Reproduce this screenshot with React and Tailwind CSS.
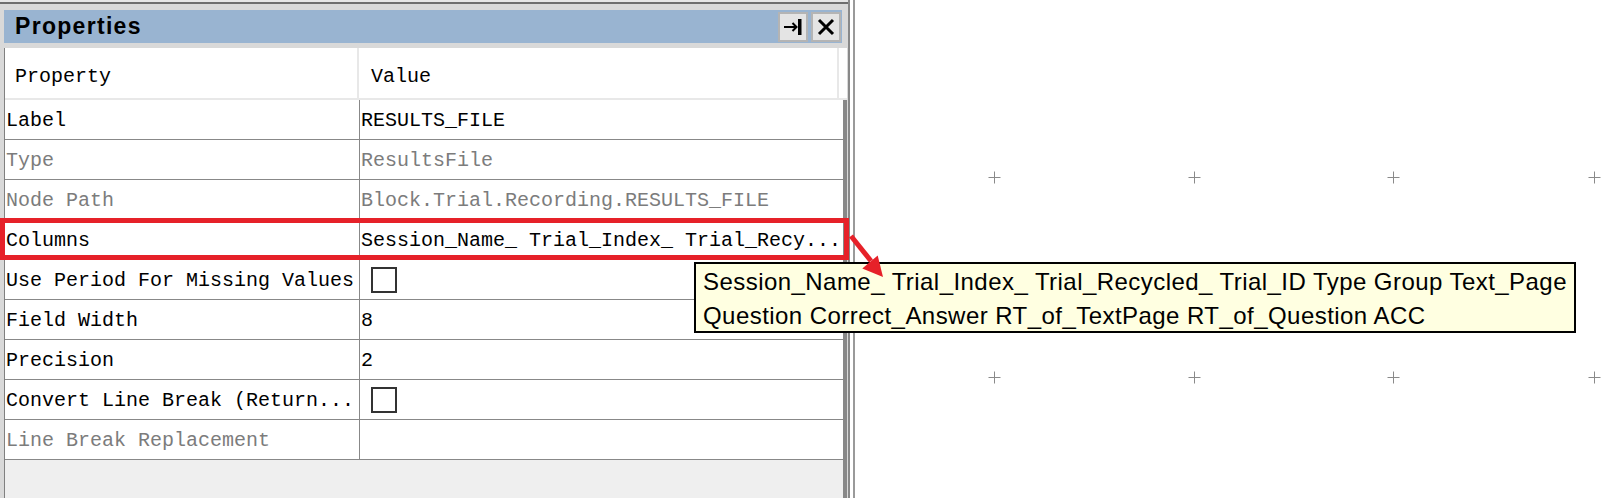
import React from 'react';

const rows = [
  { label: 'Label', value: 'RESULTS_FILE' },
  { label: 'Type', value: 'ResultsFile', muted: true },
  { label: 'Node Path', value: 'Block.Trial.Recording.RESULTS_FILE', muted: true },
  { label: 'Columns', value: 'Session_Name_ Trial_Index_ Trial_Recy...' },
  { label: 'Use Period For Missing Values', check: true },
  { label: 'Field Width', value: '8' },
  { label: 'Precision', value: '2' },
  { label: 'Convert Line Break (Return...', check: true },
  { label: 'Line Break Replacement', value: '', muted: true },
];

const plusSpots = [
  'left-[133px] top-[171px]',
  'left-[333px] top-[171px]',
  'left-[532px] top-[171px]',
  'left-[733px] top-[171px]',
  'left-[133px] top-[371px]',
  'left-[333px] top-[371px]',
  'left-[532px] top-[371px]',
  'left-[733px] top-[371px]',
];

function Plus({ spot }) {
  return (
    <svg className={`absolute ${spot}`} width="13" height="13" viewBox="0 0 13 13">
      <path d="M6.5 0.5V12.5M0.5 6.5H12.5" stroke="#8a8a8a" strokeWidth="1" />
    </svg>
  );
}

export default function App() {
  const mono = { fontFamily: '"Liberation Mono", monospace' };

  return (
    <div className="relative w-[1610px] h-[498px] overflow-hidden bg-white flex">
      {/* properties panel */}
      <div className="w-[848px] h-full flex flex-col bg-[#d9d9d9]">
        <div className="h-[2px] bg-[#e6e6e6]" />
        <div className="h-[2px] bg-[#6e6e6e]" />
        <div className="h-[6px]" />
        <div className="h-[33px] ml-[4px] mr-[6px] bg-[#99b4d1] flex items-center justify-between">
          <span
            className="pl-[11px] text-[23px] font-bold tracking-[1.3px] text-black leading-none"
            style={{ fontFamily: '"Liberation Sans", Arial, sans-serif' }}
          >
            Properties
          </span>
          <div className="flex gap-[3px] mr-[1px]">
            <div className="w-[30px] h-[30px] border-2 border-[#b4b4b4] bg-[#e4e4e4] flex items-center justify-center">
              <svg width="26" height="26" viewBox="0 0 26 26">
                <path d="M4 13H16" stroke="#000" strokeWidth="2" />
                <path d="M12.5 9L16.5 13L12.5 17" stroke="#000" strokeWidth="2" fill="none" />
                <rect x="18" y="5" width="3.5" height="16" fill="#000" />
              </svg>
            </div>
            <div className="w-[30px] h-[30px] border-2 border-[#b4b4b4] bg-[#e4e4e4] flex items-center justify-center">
              <svg width="26" height="26" viewBox="0 0 26 26">
                <path d="M6 6L20 20M20 6L6 20" stroke="#000" strokeWidth="3" />
              </svg>
            </div>
          </div>
        </div>
        <div className="h-[5px]" />

        <div className="flex-1 ml-[4px] mr-[1px] border-l border-[#808080] flex flex-col bg-white" style={mono}>
          <div className="h-[52px] flex border-b-2 border-[#e8e8e8] text-[20px] text-black">
            <div className="w-[354px] border-r-2 border-[#e8e8e8] pl-[10px] pt-[7px] flex items-center">Property</div>
            <div className="flex-1 pl-[12px] pt-[7px] flex items-center">Value</div>
            <div className="w-[10px] border-l-2 border-[#e8e8e8]" />
          </div>
          <div className="flex-1 flex flex-col border-r-[4px] border-[#888888] bg-[#efefef]">
            {rows.map((r) => (
              <div key={r.label} className="h-[40px] flex border-b border-[#888888] bg-white text-[20px] leading-none">
                <div
                  className={`w-[355px] border-r border-[#888888] pl-[1px] pt-[3px] flex items-center whitespace-nowrap overflow-hidden ${
                    r.muted ? 'text-[#7c7c7c]' : 'text-black'
                  }`}
                >
                  {r.label}
                </div>
                <div
                  className={`flex-1 pl-[1px] flex items-center whitespace-nowrap overflow-hidden ${
                    r.muted ? 'text-[#7c7c7c]' : 'text-black'
                  }`}
                >
                  {r.check ? (
                    <div className="ml-[10px] w-[26px] h-[26px] border-2 border-[#333333] bg-white" />
                  ) : (
                    <span className="pt-[3px]">{r.value}</span>
                  )}
                </div>
              </div>
            ))}
          </div>
        </div>
      </div>

      {/* splitter */}
      <div className="w-[7px] h-full flex">
        <div className="w-[2px] bg-[#888888]" />
        <div className="w-[3px] bg-white" />
        <div className="w-[2px] bg-[#9a9a9a]" />
      </div>

      {/* canvas */}
      <div className="relative flex-1 h-full bg-white">
        {plusSpots.map((s) => (
          <Plus key={s} spot={s} />
        ))}
      </div>

      {/* highlight box around Columns row */}
      <div className="absolute left-0 top-[218px] w-[849px] h-[42px] border-[5px] border-[#e62129]" />

      {/* tooltip */}
      <div
        className="absolute left-[694px] top-[262px] w-[882px] h-[71px] border-2 border-black bg-[#ffffe1] pl-[7px] pt-[1px] text-[24px] tracking-[0.45px] leading-[34px] text-black whitespace-nowrap"
        style={{ fontFamily: '"Liberation Sans", Arial, sans-serif' }}
      >
        <div>Session_Name_ Trial_Index_ Trial_Recycled_ Trial_ID Type Group Text_Page</div>
        <div>Question Correct_Answer RT_of_TextPage RT_of_Question ACC</div>
      </div>

      {/* arrow, drawn over the tooltip */}
      <svg className="absolute left-[840px] top-[225px]" width="50" height="60" viewBox="0 0 50 60">
        <path d="M11 11L31 36" stroke="#e62129" strokeWidth="5" />
        <polygon points="43,52 37.7,30.6 22.3,43.4" fill="#e62129" />
      </svg>
    </div>
  );
}
